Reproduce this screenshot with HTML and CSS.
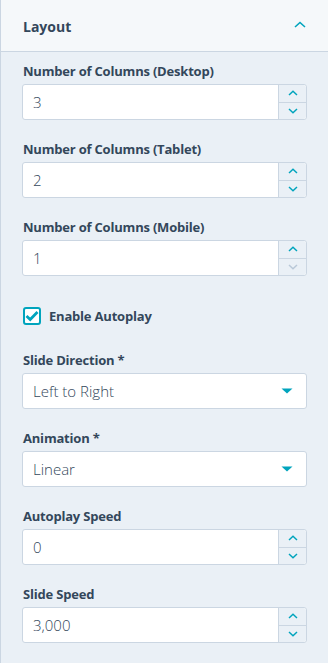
FILE: index.html
```html
<!DOCTYPE html>
<html>
<head>
<meta charset="utf-8">
<link rel="stylesheet" href="styles.css">
</head>
<body>
<div class="panel">
  <div class="header">
    <span class="title">Layout</span>
    <svg class="chev" width="12" height="7" viewBox="0 0 12 7"><path d="M1 6 L6 1.5 L11 6" fill="none" stroke="#00a4bd" stroke-width="1.6"/></svg>
  </div>
  <div class="body">
    <div class="field">
      <div class="label">Number of Columns (Desktop)</div>
      <div class="num">
        <div class="val">3</div>
        <div class="spin">
          <div class="btn"><svg width="10" height="6" viewBox="0 0 10 6"><path d="M1 5 L5 1.3 L9 5" fill="none" stroke="#00a4bd" stroke-width="1.5"/></svg></div>
          <div class="btn"><svg width="10" height="6" viewBox="0 0 10 6"><path d="M1 1 L5 4.7 L9 1" fill="none" stroke="#00a4bd" stroke-width="1.5"/></svg></div>
        </div>
      </div>
    </div>
    <div class="field">
      <div class="label">Number of Columns (Tablet)</div>
      <div class="num">
        <div class="val">2</div>
        <div class="spin">
          <div class="btn"><svg width="10" height="6" viewBox="0 0 10 6"><path d="M1 5 L5 1.3 L9 5" fill="none" stroke="#00a4bd" stroke-width="1.5"/></svg></div>
          <div class="btn"><svg width="10" height="6" viewBox="0 0 10 6"><path d="M1 1 L5 4.7 L9 1" fill="none" stroke="#00a4bd" stroke-width="1.5"/></svg></div>
        </div>
      </div>
    </div>
    <div class="field">
      <div class="label">Number of Columns (Mobile)</div>
      <div class="num">
        <div class="val">1</div>
        <div class="spin">
          <div class="btn"><svg width="10" height="6" viewBox="0 0 10 6"><path d="M1 5 L5 1.3 L9 5" fill="none" stroke="#00a4bd" stroke-width="1.5"/></svg></div>
          <div class="btn"><svg width="10" height="6" viewBox="0 0 10 6"><path d="M1 1 L5 4.7 L9 1" fill="none" stroke="#b9c8d8" stroke-width="1.5"/></svg></div>
        </div>
      </div>
    </div>
    <div class="check-row">
      <span class="box"><svg width="14" height="12" viewBox="0 0 14 12"><path d="M1.5 6 L5.2 9.5 L12.5 2" fill="none" stroke="#00a4bd" stroke-width="2.8"/></svg></span>
      <span class="check-label">Enable Autoplay</span>
    </div>
    <div class="field">
      <div class="label">Slide Direction *</div>
      <div class="select">
        <span class="val">Left to Right</span>
        <svg width="12" height="6" viewBox="0 0 12 6"><path d="M0.5 0.5 L11.5 0.5 L6 5.5 Z" fill="#00a4bd"/></svg>
      </div>
    </div>
    <div class="field">
      <div class="label">Animation *</div>
      <div class="select">
        <span class="val">Linear</span>
        <svg width="12" height="6" viewBox="0 0 12 6"><path d="M0.5 0.5 L11.5 0.5 L6 5.5 Z" fill="#00a4bd"/></svg>
      </div>
    </div>
    <div class="field">
      <div class="label">Autoplay Speed</div>
      <div class="num">
        <div class="val">0</div>
        <div class="spin">
          <div class="btn"><svg width="10" height="6" viewBox="0 0 10 6"><path d="M1 5 L5 1.3 L9 5" fill="none" stroke="#00a4bd" stroke-width="1.5"/></svg></div>
          <div class="btn"><svg width="10" height="6" viewBox="0 0 10 6"><path d="M1 1 L5 4.7 L9 1" fill="none" stroke="#00a4bd" stroke-width="1.5"/></svg></div>
        </div>
      </div>
    </div>
    <div class="field">
      <div class="label">Slide Speed</div>
      <div class="num">
        <div class="val">3,000</div>
        <div class="spin">
          <div class="btn"><svg width="10" height="6" viewBox="0 0 10 6"><path d="M1 5 L5 1.3 L9 5" fill="none" stroke="#00a4bd" stroke-width="1.5"/></svg></div>
          <div class="btn"><svg width="10" height="6" viewBox="0 0 10 6"><path d="M1 1 L5 4.7 L9 1" fill="none" stroke="#00a4bd" stroke-width="1.5"/></svg></div>
        </div>
      </div>
    </div>
  </div>
</div>
</body>
</html>
```

FILE: styles.css
```css
html, body {
  margin: 0;
  padding: 0;
  background: #eaf0f6;
}
body {
  font-family: "Open Sans", "Noto Sans", sans-serif;
  color: #33475b;
}
.panel {
  width: 328px;
  height: 663px;
  box-sizing: border-box;
  border-left: 1px solid #cbd6e2;
  background: #eaf0f6;
}
.header {
  height: 52px;
  box-sizing: border-box;
  background: #f5f8fa;
  border-bottom: 1px solid #cbd6e2;
  display: flex;
  align-items: center;
  justify-content: space-between;
  padding: 0 22px 0 22px;
}
.title {
  font-size: 14px;
  font-weight: 700;
  color: #33475b;
  position: relative;
  top: 1px;
}
.chev {
  margin-top: -2px;
}
.body {
  padding: 10px 21px 0 21px;
}
.field {
  margin-bottom: 20px;
}
.label {
  font-size: 13px;
  font-weight: 700;
  line-height: 18px;
  letter-spacing: -0.2px;
  margin-bottom: 4px;
  padding-left: 1px;
  color: #33475b;
}
.num, .select {
  height: 36px;
  box-sizing: border-box;
  border: 1px solid #cbd6e2;
  border-radius: 3px;
  background: #fff;
  display: flex;
}
.num .val, .select .val {
  flex: 1;
  font-size: 15px;
  font-weight: 300;
  line-height: 34px;
  padding-left: 10px;
  color: #33475b;
}
.spin {
  width: 27px;
  border-left: 1px solid #cbd6e2;
  background: #eaf0f6;
  display: flex;
  flex-direction: column;
  border-radius: 0 3px 3px 0;
}
.btn {
  flex: 1;
  display: flex;
  align-items: center;
  justify-content: center;
}
.btn + .btn {
  border-top: 1px solid #cbd6e2;
}
.select {
  align-items: center;
  padding-right: 13px;
}
.check-row {
  display: flex;
  align-items: center;
  margin-top: 31px;
  margin-bottom: 26px;
  padding-left: 1px;
}
.box {
  width: 18px;
  height: 18px;
  box-sizing: border-box;
  border: 2px solid #00a4bd;
  border-radius: 3px;
  background: #fff;
  display: flex;
  align-items: center;
  justify-content: center;
}
.check-label {
  font-size: 13px;
  font-weight: 700;
  letter-spacing: -0.2px;
  margin-left: 8px;
}
```
